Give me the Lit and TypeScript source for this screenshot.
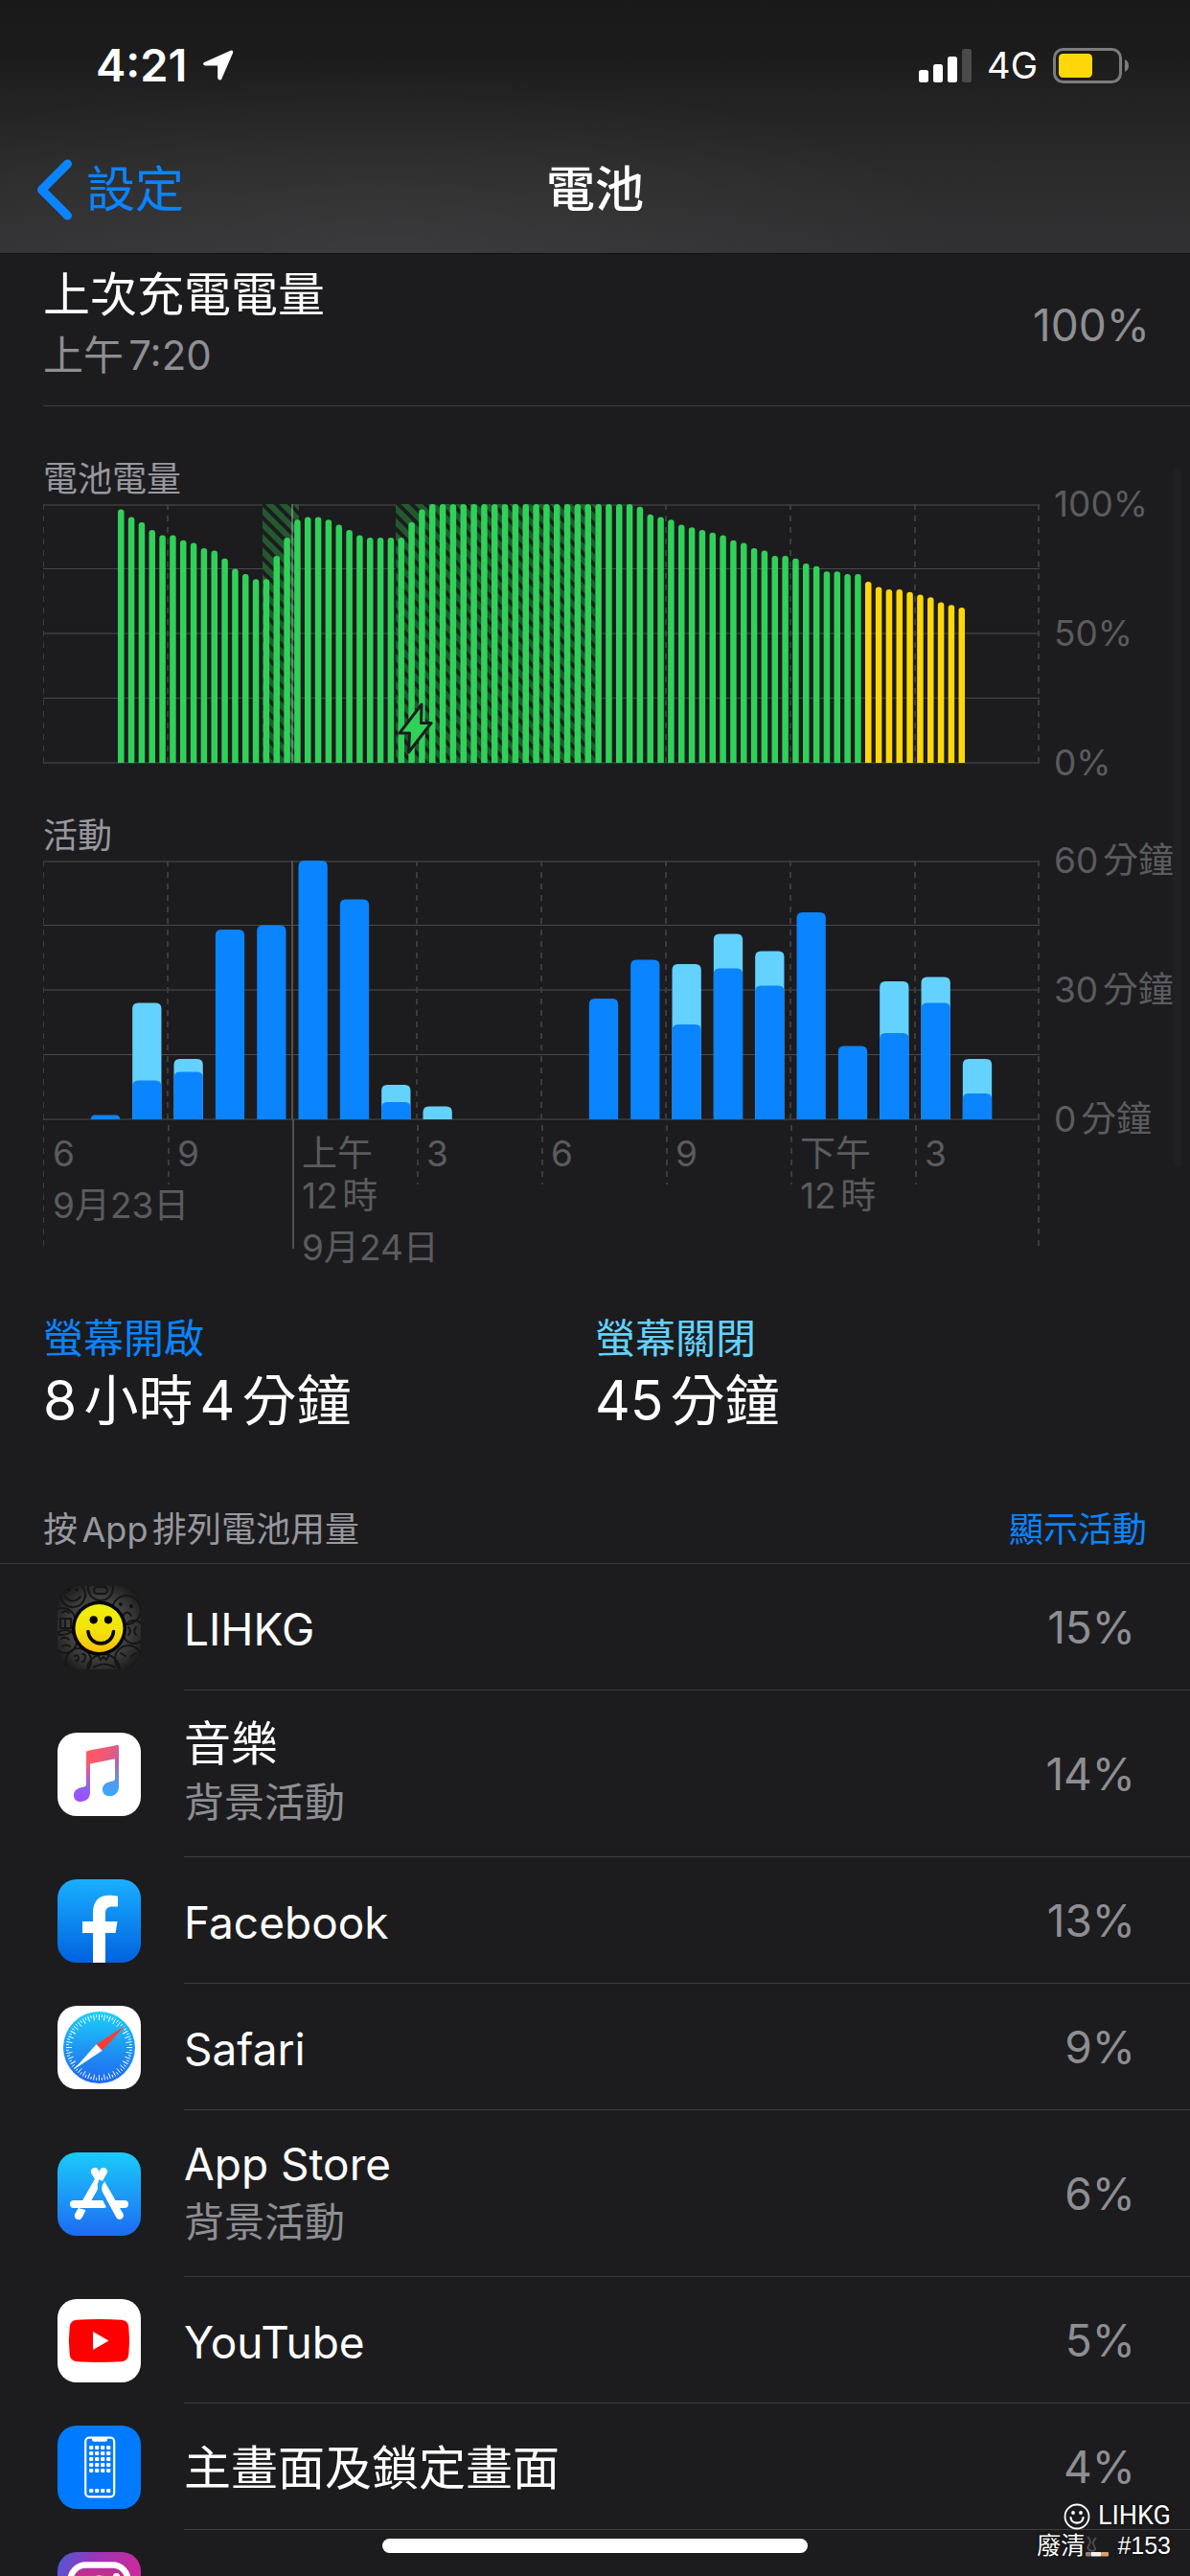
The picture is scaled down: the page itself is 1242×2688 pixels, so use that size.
import { LitElement, html, css, svg, nothing, type TemplateResult } from "lit";
import { customElement, property } from "lit/decorators.js";

const PLOT_W = 1040;
const PLOT_H = 270;

/* Battery level in percent, one sample per quarter of an hour. */
const FIRST_SAMPLE = 7;
const LEVELS: number[] = [
  98, 95, 93, 90, 88, 88, 86, 85, 83, 82, 79, 75, 73, 71, 71, 80, 87, 94, 95, 95,
  94, 92, 90, 88, 87, 87, 87, 87, 93, 98,
  ...new Array(20).fill(100),
  99, 96, 95, 94, 92, 91, 90, 89, 88, 86, 85, 83, 82, 80, 80, 79, 77, 76, 74, 74, 73, 73,
  70, 68, 67, 67, 66, 65, 64, 62, 61, 60,
];
const LOW_POWER_FROM = 79;

/* Charging periods as [start, end] on the plot's own scale. */
const CHARGING: [number, number][] = [[229, 267], [368, 576]];

/* Minutes per hour slot: [slot, screen on, total]. */
const ACTIVITY: [number, number, number][] = [
  [1, 1, 1], [2, 9, 27], [3, 11, 14], [4, 44, 44], [5, 45, 45], [6, 60, 60], [7, 51, 51],
  [8, 4, 8], [9, 0, 3], [13, 28, 28], [14, 37, 37], [15, 22, 36], [16, 35, 43],
  [17, 31, 39], [18, 48, 48], [19, 17, 17], [20, 20, 32], [21, 27, 33], [22, 6, 14],
];

interface Tick { time: string[]; date?: string; midnight?: boolean }
const TICKS: Tick[] = [
  { time: ["6"], date: "9月23日" },
  { time: ["9"] },
  { time: ["上午", "12時"], date: "9月24日", midnight: true },
  { time: ["3"] },
  { time: ["6"] },
  { time: ["9"] },
  { time: ["下午", "12時"] },
  { time: ["3"] },
];

const roundedTop = (x: number, w: number, h: number, r: number) => {
  const k = Math.min(r, h);
  const y = PLOT_H - h;
  return `M${x} ${PLOT_H}V${y + k}Q${x} ${y} ${x + k} ${y}H${x + w - k}Q${x + w} ${y} ${x + w} ${y + k}V${PLOT_H}Z`;
};

const gridLines = () => svg`
  ${[0, 1, 2, 3, 4].map((i) => svg`<rect x="0" y=${i % 2 ? i * 67.5 - 0.5 : i * 67.5 - (i === 0 ? 0 : 1)}
      width=${PLOT_W} height=${i % 2 ? 1 : 2} fill=${i % 2 ? "#49494b" : "#353537"} />`)}
  ${[0, 1, 2, 3, 4, 5, 6, 7, 8].map((i) => {
    if (i === 2) return svg`<rect x="259" y="0" width="2" height=${PLOT_H} fill="#505052" />`;
    const x = i === 0 ? 0.5 : i === 8 ? PLOT_W - 1 : i * 130;
    return svg`<line x1=${x} x2=${x} y1="0" y2=${PLOT_H}
        stroke="#3c3c3e" stroke-width=${i === 0 ? 1 : 2} stroke-dasharray="6 6" />`;
  })}`;

const chartStyles = css`
  :host { display: block; padding-left: 45px; color: #5b5b5f; }
  h2 { margin: 0 0 4px; font-size: 36px; line-height: 44px; font-weight: 400; color: #98989f; }
  .frame { display: grid; grid-template-columns: minmax(0, 1fr) 157px; }
  .plot { display: block; width: 100%; height: auto; overflow: visible; }
  .scale {
    display: flex; flex-direction: column; justify-content: space-between;
    margin: -22px 0; padding: 0 0 0 15px; list-style: none;
    font-size: 37px; line-height: 44px; white-space: nowrap;
  }
`;

@customElement("level-chart")
export class LevelChart extends LitElement {
  static styles = [chartStyles];

  render() {
    const step = PLOT_W / 96;
    return html`
      <h2>電池電量</h2>
      <div class="frame">
        <svg class="plot" viewBox="0 0 ${PLOT_W} ${PLOT_H}" role="img" aria-label="電池電量">
          <defs>
            <pattern id="hatch" width="10" height="10" patternUnits="userSpaceOnUse" patternTransform="rotate(-45)">
              <rect width="10" height="10" fill="#23592f" />
              <rect width="4" height="10" fill="#1c1c1e" />
            </pattern>
          </defs>
          ${gridLines()}
          ${CHARGING.map(([a, b]) => svg`<rect x=${a} y="0" width=${b - a} height=${PLOT_H} fill="url(#hatch)" />`)}
          <rect x="259" y="0" width="2" height=${PLOT_H} fill="#ffffff" opacity=".3" />
          ${LEVELS.map((v, i) => {
            const slot = FIRST_SAMPLE + i;
            return svg`<path d=${roundedTop((slot + 0.5) * step - 3.25, 6.5, (v / 100) * PLOT_H, 3.2)}
              fill=${slot >= LOW_POWER_FROM ? "#ffd60a" : "#30d158"} />`;
          })}
          <path d="M395 209 372 239H382.500L381.500 259 405 228.500H394.500Z" fill="#30d158" stroke="#1c1c1e"
            stroke-width="3" stroke-linejoin="round" />
        </svg>
        <ul class="scale"><li>100%</li><li>50%</li><li>0%</li></ul>
      </div>`;
  }
}

@customElement("activity-chart")
export class ActivityChart extends LitElement {
  static styles = [chartStyles, css`
    :host { text-autospace: normal; }
    .axis {
      grid-column: 1; display: grid; grid-template-columns: repeat(8, minmax(0, 1fr));
      margin: 0; padding: 0; list-style: none; font-size: 37px; line-height: 44px; white-space: nowrap;
      --dash: repeating-linear-gradient(transparent 0 6px, #3c3c3e 6px 12px);
      background: var(--dash) right top / 2px 132px no-repeat;
    }
    .tick {
      display: flex; flex-direction: column; gap: 10px; padding: 14px 0 0 10px;
      background: var(--dash) left top / 2px 68px no-repeat;
    }
    .tick.dated { background-size: 1px 132px; }
    .tick.midnight { background: linear-gradient(#505052, #505052) left top / 2px 135px no-repeat; }
    .line { display: block; }
    .date { text-autospace: no-autospace; }
  `];

  render() {
    const step = PLOT_W / 24;
    const px = (m: number) => (m / 60) * PLOT_H;
    return html`
      <h2>活動</h2>
      <div class="frame">
        <svg class="plot" viewBox="0 0 ${PLOT_W} ${PLOT_H}" role="img" aria-label="活動">
          ${gridLines()}
          ${ACTIVITY.map(([slot, on, total]) => {
            const x = slot * step + 6.5;
            return svg`
              ${total > on ? svg`<path d=${roundedTop(x, 30.3, px(total), 6)} fill="#64d2ff" />` : nothing}
              ${on ? svg`<path d=${roundedTop(x, 30.3, px(on), 6)} fill="#0a84ff" />` : nothing}`;
          })}
        </svg>
        <ul class="scale"><li>60分鐘</li><li>30分鐘</li><li>0分鐘</li></ul>
        <ul class="axis">
          ${TICKS.map((t) => html`
            <li class="tick ${t.midnight ? "midnight" : t.date ? "dated" : ""}">
              <span>${t.time.map((l) => html`<span class="line">${l}</span>`)}</span>
              ${t.date ? html`<span class="date">${t.date}</span>` : nothing}
            </li>`)}
        </ul>
      </div>`;
  }
}

const lihkgIcon = html`<svg viewBox="0 0 87 87" aria-hidden="true">
  <defs>
    <radialGradient id="lb" cx=".5" cy=".5" r=".72"><stop offset=".3" stop-color="#525252" /><stop offset=".65" stop-color="#303030" /><stop offset="1" stop-color="#050505" /></radialGradient>
    <linearGradient id="lf" x2="0" y2="1"><stop stop-color="#eef00a" /><stop offset=".55" stop-color="#f2e20c" /><stop offset="1" stop-color="#f8bd08" /></linearGradient>
  </defs>
  <rect width="87" height="87" fill="url(#lb)" />
  <g fill="none" stroke="#161616" stroke-width="2" stroke-linecap="round">
    <circle cx="16" cy="9" r="13" /><path d="M8 11q8 9 16 0" />
    <circle cx="45" cy="2" r="13" /><rect x="38" y="1" width="14" height="7" rx="3.500" />
    <circle cx="72" cy="25" r="15" /><path d="M68 31q5-7 9 0" />
    <circle cx="5" cy="37" r="14" /><path d="M3 34h11v10H3zM8 34v10M5 28q4-4 7 0" />
    <circle cx="80" cy="48" r="12" /><path d="M74 43q4 4 0 8M82 43q-4 4 0 8" />
    <circle cx="8" cy="58" r="12" /><path d="M4 55q5-3 8 1M5 63q4-3 8 0" />
    <circle cx="22" cy="78" r="13" /><path d="M18 73q4-2 4 2t-3 3M26 71q4 0 3 4t-3 4" />
    <circle cx="48" cy="88" r="17" /><path d="M42 72l3 5 3-3 3 3 3-5M38 85q10-7 22 0" />
    <circle cx="74" cy="76" r="14" /><path d="M66 70l5 3M82 70l-5 3" />
  </g>
  <g fill="#111"><circle cx="66" cy="19" r="2" /><circle cx="77" cy="21" r="2" /><circle cx="12" cy="4" r="1.500" /><circle cx="20" cy="4" r="1.500" /></g>
  <circle cx="43.500" cy="44" r="28.500" fill="#060606" />
  <circle cx="43.500" cy="44" r="25" fill="url(#lf)" />
  <circle cx="37.700" cy="35.300" r="4.100" /><circle cx="53" cy="35.300" r="4.100" />
  <path d="M32 47.500C34 64 56.500 64 58.500 47.500" fill="none" stroke="#060606" stroke-width="3.600" stroke-linecap="round" />
</svg>`;

const musicIcon = html`<svg viewBox="0 0 87 87" aria-hidden="true">
  <defs>
    <linearGradient id="ml" gradientUnits="userSpaceOnUse" x1="32" y1="18" x2="24" y2="70"><stop stop-color="#ff5566" /><stop offset=".35" stop-color="#e85a88" /><stop offset=".75" stop-color="#8a62f6" /><stop offset="1" stop-color="#a24dff" /></linearGradient>
    <linearGradient id="mr" gradientUnits="userSpaceOnUse" x1="62" y1="13" x2="58" y2="64"><stop stop-color="#f8586e" /><stop offset=".3" stop-color="#c0609e" /><stop offset=".7" stop-color="#5b94e6" /><stop offset="1" stop-color="#3ba8ff" /></linearGradient>
    <linearGradient id="mb" gradientUnits="userSpaceOnUse" x1="40" y1="16" x2="62" y2="28"><stop stop-color="#ff5868" /><stop offset=".5" stop-color="#ee5a78" /><stop offset="1" stop-color="#c8609a" /></linearGradient>
  </defs>
  <rect width="87" height="87" fill="#fff" />
  <path d="M30 21V54q0 2-2 2.400L24.500 57.200C19.500 58.400 17 61 17 65.200 17 69.200 19.800 72 24 72 29.800 72 34 68.500 34 62.500V21Z" fill="url(#ml)" />
  <path d="M60 15V48q0 2-2 2.500L54.500 51.300C49.500 52.500 47 55.200 47 59.300 47 63.300 49.800 66.300 54 66.300 59.800 66.300 64 62.700 64 56.500V15Z" fill="url(#mr)" />
  <path d="M32 18.700 62.400 12.900Q64 12.600 64 14.400V26.500L34 32.500 30 34V21.200Q30 19 32 18.700Z" fill="url(#mb)" />
</svg>`;

const facebookIcon = html`<svg viewBox="0 0 87 87" aria-hidden="true">
  <defs><linearGradient id="fb" x2="0" y2="1"><stop stop-color="#1aafff" /><stop offset="1" stop-color="#0062e0" /></linearGradient></defs>
  <rect width="87" height="87" fill="url(#fb)" />
  <path d="M37 87V56H26V44H37V35C37 23 43.500 16.800 53 16.800 57.500 16.800 61 17.300 63 17.700V28.600H57.500C52 28.600 50 31.300 50 35.500V44H62.500L60.600 56H50V87Z" fill="#fff" />
</svg>`;

const safariIcon = html`<svg viewBox="0 0 87 87" aria-hidden="true">
  <defs><linearGradient id="sf" x2="0" y2="1"><stop stop-color="#1dd0fb" /><stop offset=".5" stop-color="#1e97f3" /><stop offset="1" stop-color="#1f68f1" /></linearGradient></defs>
  <rect width="87" height="87" fill="#fff" />
  <circle cx="43.500" cy="43.500" r="37.500" fill="url(#sf)" />
  ${Array.from({ length: 72 }, (_, i) => svg`<line x1="43.500" x2="43.500" y1="9" y2=${i % 2 ? 12 : 15}
    stroke="#fff" stroke-width=".9" transform="rotate(${i * 5} 43.5 43.5)" />`)}
  <path d="M70.500 20.700 40.500 40.300 46.700 46.800Z" fill="#ff3b30" />
  <path d="M17 66.500 40.500 40.300 46.700 46.800Z" fill="#fff" />
</svg>`;

const appStoreIcon = html`<svg viewBox="0 0 87 87" aria-hidden="true">
  <defs><linearGradient id="as" gradientUnits="userSpaceOnUse" x1="0" y1="0" x2="0" y2="87"><stop stop-color="#1bcbfb" /><stop offset="1" stop-color="#1d6bf2" /></linearGradient></defs>
  <rect width="87" height="87" fill="url(#as)" />
  <g fill="none" stroke="#fff" stroke-width="8" stroke-linecap="round">
    <path d="M17 54H48" /><path d="M62 54H70" />
    <path d="M39 20 43 27" />
    <path d="M25 60.500 22 66" />
    <path d="M48 20 30.500 50.500" />
  </g>
  <path d="M22 58H52V62.500L29 60Z" fill="url(#as)" />
  <path d="M25.500 59.200Q29 60.200 28 62.600L25.600 67.600Q23.500 71 19.900 69.400 17 67.600 18.400 64L20.500 60.500Q22.300 58.300 25.500 59.200Z" fill="#fff" />
  <path d="M48 30.500Q45.500 35.500 48 40.500L61 65.800" fill="none" stroke="url(#as)" stroke-width="10" stroke-linejoin="round" />
  <path d="M49.200 30.300Q44.300 36 47.400 42L61.300 67.800Q63.300 71 66.600 69.600 70 67.700 68.500 64Z" fill="#fff" />
  <path d="M63 50H70V58H66.500Z" fill="#fff" />
</svg>`;

const youtubeIcon = html`<svg viewBox="0 0 87 87" aria-hidden="true">
  <rect width="87" height="87" fill="#fff" />
  <path d="M20 21.800Q43.500 20.200 67 21.800 73.500 22.300 74.300 29 75.900 43.500 74.300 58 73.500 64.700 67 65.200 43.500 66.800 20 65.200 13.500 64.700 12.700 58 11.100 43.500 12.700 29 13.500 22.300 20 21.800Z" fill="#f00" />
  <path d="M37 34 53.500 43.500 37 53Z" fill="#fff" />
</svg>`;

const homeIcon = html`<svg viewBox="0 0 87 87" aria-hidden="true">
  <rect width="87" height="87" fill="#007aff" />
  <rect x="29.200" y="12.700" width="30" height="61.600" rx="4" fill="none" stroke="#fff" stroke-width="2.200" />
  <path d="M36 12.500H52V15Q52 16.800 50 16.800H38Q36 16.800 36 15Z" fill="#fff" />
  ${[23, 29, 35, 41, 47, 68].map((y) => [35.2, 41.2, 47.2, 53.2].map((x) =>
    svg`<rect x=${x - 2.1} y=${y - 2} width="4.200" height="4" rx="1" fill="#fff" />`))}
</svg>`;

const instagramIcon = html`<svg viewBox="0 0 87 87" aria-hidden="true">
  <defs>
    <linearGradient id="ig" x1="0" y1="0" x2=".8" y2=".35"><stop stop-color="#4a5bd8" /><stop offset=".5" stop-color="#9a36b8" /><stop offset="1" stop-color="#c42ca0" /></linearGradient>
    <linearGradient id="ih" x2="0" y2="1"><stop stop-color="#b02fa4" /><stop offset=".3" stop-color="#d0307a" /><stop offset="1" stop-color="#fdb44b" /></linearGradient>
  </defs>
  <rect width="87" height="87" fill="url(#ig)" />
  <rect x="13.500" y="13.500" width="60" height="60" rx="16" fill="url(#ih)" stroke="#fff" stroke-width="6.500" />
  <circle cx="43.500" cy="43.500" r="16" fill="none" stroke="#fff" stroke-width="6" />
  <circle cx="61.500" cy="25.500" r="3.600" fill="#fff" />
</svg>`;

interface Usage { name: string; latin?: boolean; note?: string; share: string; icon: TemplateResult }
const USAGE: Usage[] = [
  { name: "LIHKG", latin: true, share: "15%", icon: lihkgIcon },
  { name: "音樂", note: "背景活動", share: "14%", icon: musicIcon },
  { name: "Facebook", latin: true, share: "13%", icon: facebookIcon },
  { name: "Safari", latin: true, share: "9%", icon: safariIcon },
  { name: "App Store", latin: true, note: "背景活動", share: "6%", icon: appStoreIcon },
  { name: "YouTube", latin: true, share: "5%", icon: youtubeIcon },
  { name: "主畫面及鎖定畫面", share: "4%", icon: homeIcon },
  { name: "", share: "", icon: instagramIcon },
];

@customElement("usage-row")
export class UsageRow extends LitElement {
  @property({ attribute: false }) usage!: Usage;

  static styles = css`
    :host { display: flex; align-items: stretch; gap: 45px; padding-left: 60px; }
    .icon { flex: none; align-self: center; width: 87px; height: 87px; border-radius: 20px; overflow: hidden; }
    .icon svg { display: block; width: 100%; height: 100%; }
    .body {
      flex: 1; min-width: 0; display: flex; align-items: center; justify-content: space-between;
      min-height: 87px; padding: 22px 57px 22px 0; border-bottom: 1px solid #3d3d40;
    }
    .text { display: flex; flex-direction: column; padding: 8px 0 4px; }
    .text.double { gap: 3px; padding: 4px 0 6px; }
    .name { font-size: 49px; line-height: 60px; color: #fff; }
    .name.latin { font-size: 46px; }
    .note { font-size: 42px; line-height: 56px; color: #8e8e93; }
    .share { font-size: 46px; line-height: 60px; color: #8e8e93; }
  `;

  render() {
    const u = this.usage;
    return html`
      <div class="icon">${u.icon}</div>
      <div class="body">
        <div class="text ${u.note ? "double" : ""}">
          <span class="name ${u.latin ? "latin" : ""}">${u.name}</span>
          ${u.note ? html`<span class="note">${u.note}</span>` : nothing}
        </div>
        <span class="share">${u.share}</span>
      </div>`;
  }
}

@customElement("app-root")
export class AppRoot extends LitElement {
  static styles = css`
    :host {
      display: block; position: relative; height: 100vh; overflow: hidden;
      background: #1c1c1e; color: #fff;
      font-family: Inter, "Noto Sans CJK TC", "Noto Sans CJK HK", sans-serif;
      font-weight: 400; text-autospace: normal;
    }
    button { border: 0; background: none; padding: 0; font: inherit; color: #0a84ff; cursor: pointer; }
    header {
      border-bottom: 1px solid #111113;
      background:
        radial-gradient(ellipse 620px 190px at 32% 100%, rgba(255, 255, 255, .05), transparent),
        linear-gradient(#191919 0, #1b1b1b 20%, #232323 42%, #2b2b2c 68%, #313133 100%);
    }
    .status { display: flex; align-items: center; justify-content: space-between; height: 128px; padding: 4px 64px 0 100px; }
    .clock { display: flex; align-items: center; gap: 16px; font-size: 47px; line-height: 56px; font-weight: 600; }
    .signals { display: flex; align-items: center; gap: 16px; font-size: 38px; line-height: 44px; }
    .status svg { display: block; }
    nav { display: grid; grid-template-columns: 1fr auto 1fr; align-items: center; height: 132px; padding: 0 38px; font-size: 51px; line-height: 60px; }
    .back { display: flex; align-items: center; gap: 14px; justify-self: start; }
    .back svg { display: block; }
    h1 { margin: 0; font-size: 51px; line-height: 60px; font-weight: 500; }

    .summary {
      display: flex; align-items: center; justify-content: space-between;
      margin-left: 45px; padding: 13px 42px 24px 0; border-bottom: 1px solid #3d3d40;
    }
    .pair { display: flex; flex-direction: column; gap: 5px; }
    .name { font-size: 49px; line-height: 60px; }
    .note { font-size: 42px; line-height: 56px; color: #8e8e93; }
    .value { font-size: 46px; line-height: 60px; color: #8e8e93; }
    level-chart, activity-chart { padding-top: 54px; }

    .totals { display: grid; grid-template-columns: 1fr 1fr; margin: 0; padding: 48px 45px 0; }
    .totals dt { font-size: 42px; line-height: 50px; color: #0a84ff; }
    .totals .off { color: #64d2ff; }
    .totals dd { margin: 5px 0 0; font-size: 57px; line-height: 70px; }

    .head {
      display: flex; justify-content: space-between; padding: 77px 45px 13px;
      font-size: 36px; line-height: 44px; color: #98989f; border-bottom: 1px solid #3d3d40;
    }
    .head h2 { margin: 0; font: inherit; }
    .list { margin: 0; padding: 0; list-style: none; }

    .thumb { position: absolute; right: 9px; top: 488px; width: 9px; height: 730px; border-radius: 5px; background: #202022; }
    .home { position: absolute; left: 50%; bottom: 24px; width: 444px; height: 15px; margin-left: -222px; border-radius: 8px; background: #fff; }
    .mark {
      position: absolute; right: 20px; bottom: 16px; display: flex; flex-direction: column; align-items: flex-end;
      font-family: "Liberation Sans", "Noto Sans CJK TC", sans-serif; font-size: 25px; line-height: 31px;
      text-shadow: 0 0 3px #000;
    }
    .mark p { margin: 0; display: flex; align-items: center; }
    .brand { font-family: Roboto, sans-serif; font-size: 27px; gap: 8px; }
    .tag svg { margin-right: 8px; }
  `;

  render() {
    return html`
      <header>
        <div class="status">
          <div class="clock">
            <span>4:21</span>
            <svg width="34" height="34" viewBox="0 0 34 34" aria-hidden="true">
              <path d="M2.500 14.500 30 2.300Q32 1.800 31.500 4L19.800 31Q18 33.200 16.800 30.500V18.200Q16.800 17 15.500 17H3.200Q.5 16 2.500 14.500Z" fill="#fff" stroke="#fff" stroke-width="1.200" stroke-linejoin="round" />
            </svg>
          </div>
          <div class="signals">
            <svg width="55" height="35" viewBox="0 0 55 35" aria-hidden="true">
              <rect x="0" y="22" width="10" height="13" rx="2.500" fill="#fff" />
              <rect x="15" y="16" width="10" height="19" rx="2.500" fill="#fff" />
              <rect x="30" y="8" width="10" height="27" rx="2.500" fill="#fff" />
              <rect x="45" y="0" width="10" height="35" rx="2.500" fill="#4a4a4a" />
            </svg>
            <span>4G</span>
            <svg width="79" height="37" viewBox="0 0 79 37" aria-hidden="true">
              <rect x="1.500" y="1.500" width="69" height="34" rx="9" fill="none" stroke="#7c7c7c" stroke-width="3" />
              <rect x="6" y="6" width="35" height="25" rx="4.500" fill="#ffd60a" />
              <path d="M75 12Q79 14 79 18.500T75 25Z" fill="#7c7c7c" />
            </svg>
          </div>
        </div>
        <nav>
          <button class="back">
            <svg width="38" height="64" viewBox="0 0 38 64" aria-hidden="true">
              <path d="M32.500 5 5.500 32 32.500 59" fill="none" stroke="#0a84ff" stroke-width="9" stroke-linecap="round" stroke-linejoin="round" />
            </svg>
            <span>設定</span>
          </button>
          <h1>電池</h1>
        </nav>
      </header>
      <main>
        <section class="summary">
          <div class="pair"><span class="name">上次充電電量</span><span class="note">上午7:20</span></div>
          <span class="value">100%</span>
        </section>
        <level-chart></level-chart>
        <activity-chart></activity-chart>
        <dl class="totals">
          <div><dt>螢幕開啟</dt><dd>8小時4分鐘</dd></div>
          <div><dt class="off">螢幕關閉</dt><dd>45分鐘</dd></div>
        </dl>
        <section>
          <div class="head"><h2>按App排列電池用量</h2><button>顯示活動</button></div>
          <ul class="list">${USAGE.map((u) => html`<li><usage-row .usage=${u}></usage-row></li>`)}</ul>
        </section>
      </main>
      <div class="thumb"></div>
      <div class="home"></div>
      <div class="mark">
        <p class="brand">
          <svg width="28" height="28" viewBox="0 0 28 28" aria-hidden="true">
            <circle cx="14" cy="14" r="12.500" fill="none" stroke="#fff" stroke-width="1.800" />
            <circle cx="10" cy="10" r="1.900" fill="#fff" /><circle cx="18" cy="10" r="1.900" fill="#fff" />
            <path d="M7.500 15C8 22.500 20 22.500 20.500 15" fill="none" stroke="#fff" stroke-width="2.200" stroke-linecap="round" />
          </svg>
          <span>LIHKG</span>
        </p>
        <p class="tag">
          <span>廢清</span>
          <svg width="26" height="25" viewBox="0 0 26 25" aria-hidden="true">
            <path d="M3 3Q8 8 4.500 12T8 18M12 4Q7 9 10 13T8 18" fill="none" stroke="#4c4c4e" stroke-width="2" />
            <rect x="1" y="19" width="6" height="4.500" rx="1" fill="#8a817a" />
            <rect x="7" y="19" width="10" height="4.500" fill="#f2f2f2" />
            <rect x="17" y="19" width="8" height="4.500" rx="1" fill="#d9a066" />
          </svg>
          <span>#153</span>
        </p>
      </div>`;
  }
}
